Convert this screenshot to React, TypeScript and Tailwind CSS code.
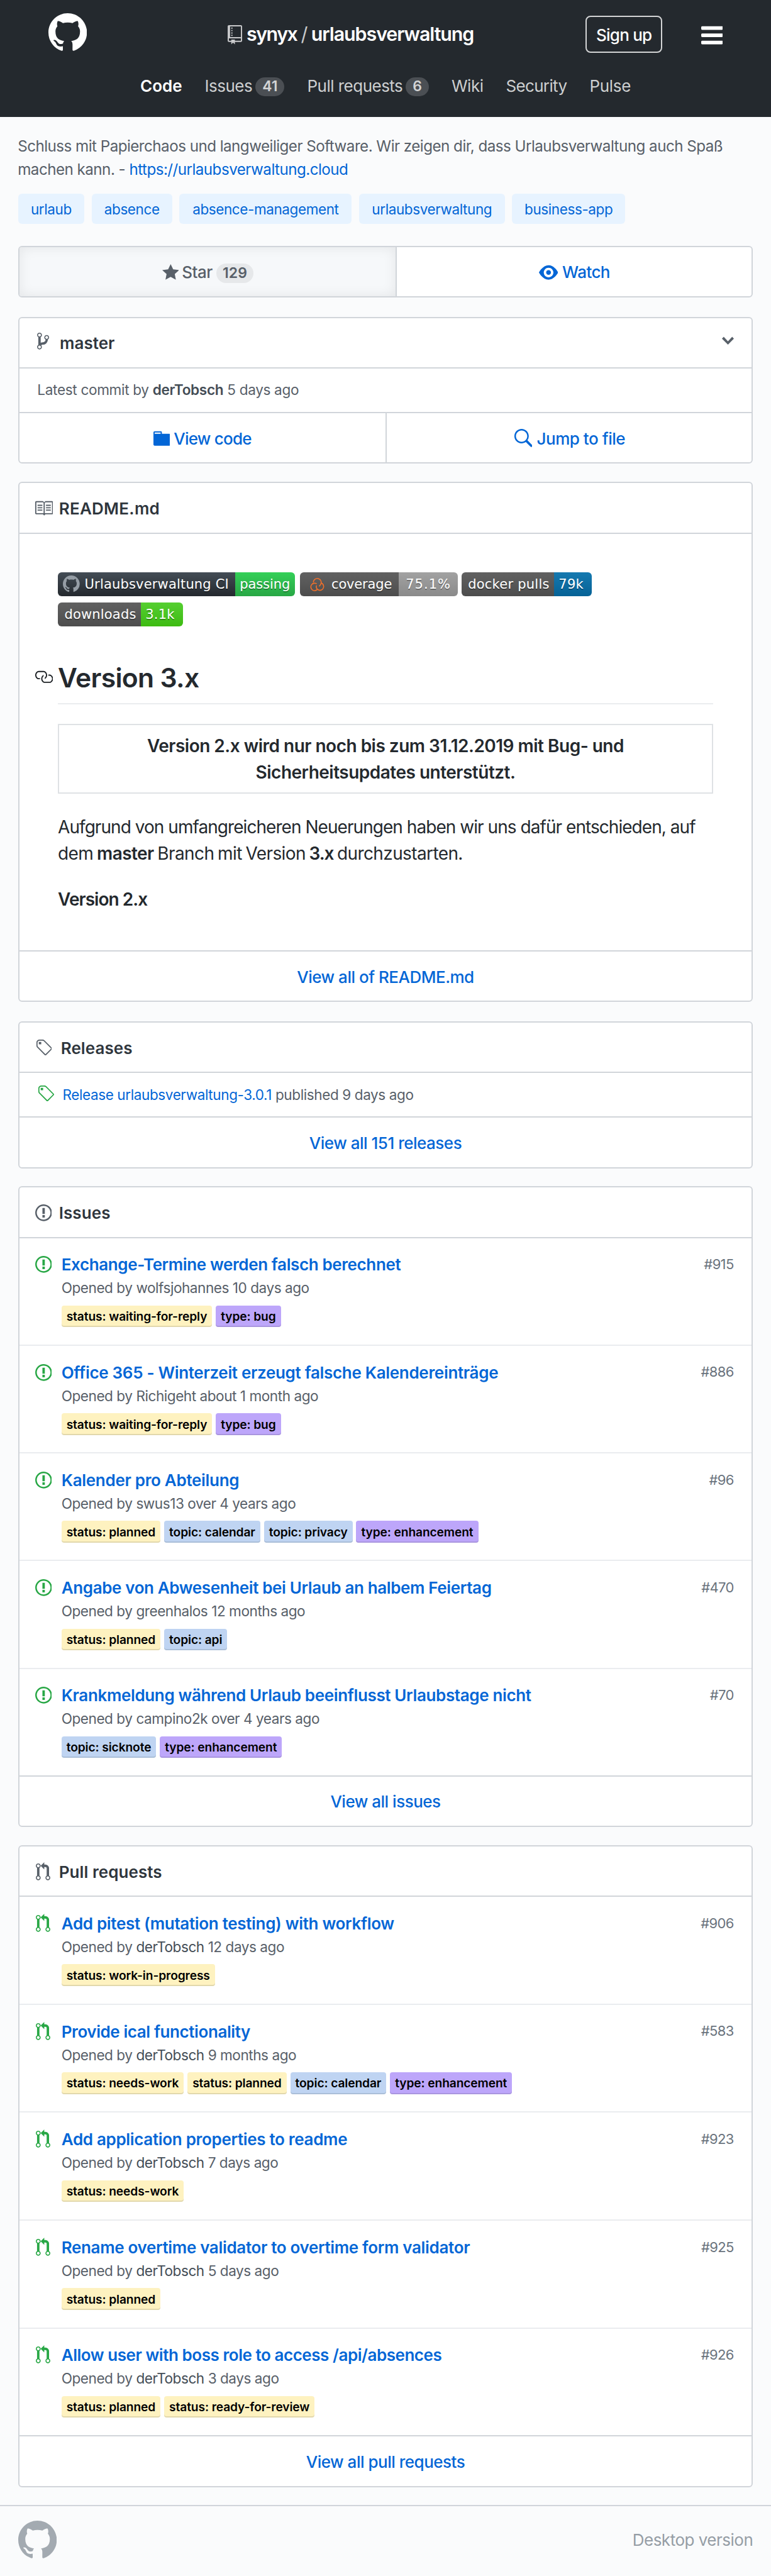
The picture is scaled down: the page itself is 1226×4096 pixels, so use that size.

import type { ReactNode } from "react";

const icons = {
  mark: { w: 16, d: "M8 0C3.58 0 0 3.58 0 8c0 3.54 2.29 6.53 5.47 7.59.4.07.55-.17.55-.38 0-.19-.01-.82-.01-1.49-2.01.37-2.53-.49-2.69-.94-.09-.23-.48-.94-.82-1.13-.28-.15-.68-.52-.01-.53.63-.01 1.08.58 1.23.82.72 1.21 1.87.87 2.33.66.07-.52.28-.87.51-1.07-1.78-.2-3.64-.89-3.64-3.95 0-.87.31-1.59.82-2.15-.08-.2-.36-1.02.08-2.12 0 0 .67-.21 2.2.82.64-.18 1.32-.27 2-.27.68 0 1.36.09 2 .27 1.53-1.04 2.2-.82 2.2-.82.44 1.1.16 1.92.08 2.12.51.56.82 1.27.82 2.15 0 3.07-1.87 3.75-3.65 3.95.29.25.54.73.54 1.48 0 1.07-.01 1.93-.01 2.2 0 .21.15.46.55.38A8.013 8.013 0 0 0 16 8c0-4.42-3.58-8-8-8z" },
  bars: { w: 12, d: "M11.41 9H.59C0 9 0 8.59 0 8c0-.59 0-1 .59-1H11.4c.59 0 .59.41.59 1 0 .59 0 1-.59 1h.01zm0-4H.59C0 5 0 4.59 0 4c0-.59 0-1 .59-1H11.4c.59 0 .59.41.59 1 0 .59 0 1-.59 1h.01zM.59 11H11.4c.59 0 .59.41.59 1 0 .59 0 1-.59 1H.59C0 13 0 12.59 0 12c0-.59 0-1 .59-1z" },
  repo: { w: 12, d: "M4 9H3V8h1v1zm0-3H3v1h1V6zm0-2H3v1h1V4zm0-2H3v1h1V2zm8-1v12c0 .55-.45 1-1 1H6v2l-1.5-1.5L3 16v-2H1c-.55 0-1-.45-1-1V1c0-.55.45-1 1-1h10c.55 0 1 .45 1 1zm-1 10H1v2h2v-1h3v1h5v-2zm0-10H2v9h9V1z" },
  star: { w: 14, d: "M14 6l-4.9-.64L7 1 4.9 5.36 0 6l3.6 3.26L2.67 14 7 11.67 11.33 14l-.93-4.74L14 6z" },
  eye: { w: 16, d: "M8.06 2C3 2 0 8 0 8s3 6 8.06 6C13 14 16 8 16 8s-3-6-7.94-6zM8 12c-2.2 0-4-1.78-4-4 0-2.2 1.8-4 4-4 2.22 0 4 1.8 4 4 0 2.22-1.78 4-4 4zm2-4c0 1.11-.89 2-2 2-1.11 0-2-.89-2-2 0-1.11.89-2 2-2 1.11 0 2 .89 2 2z" },
  branch: { w: 10, d: "M10 5c0-1.11-.89-2-2-2a1.993 1.993 0 0 0-1 3.72v.3c-.02.52-.23.98-.63 1.38-.4.4-.86.61-1.38.63-.83.02-1.48.16-2 .45V4.72a1.993 1.993 0 0 0-1-3.72C.88 1 0 1.89 0 3a2 2 0 0 0 1 1.72v6.56c-.59.35-1 .99-1 1.72 0 1.11.89 2 2 2 1.11 0 2-.89 2-2 0-.53-.2-1-.53-1.36.09-.06.48-.41.59-.47.25-.11.56-.17.94-.17 1.05-.05 1.95-.45 2.75-1.25S8.95 7.77 9 6.73h-.02C9.59 6.37 10 5.73 10 5zM2 1.8c.66 0 1.2.55 1.2 1.2 0 .65-.55 1.2-1.2 1.2C1.35 4.2.8 3.65.8 3c0-.65.55-1.2 1.2-1.2zm0 12.41c-.66 0-1.2-.55-1.2-1.2 0-.65.55-1.2 1.2-1.2.65 0 1.2.55 1.2 1.2 0 .65-.55 1.2-1.2 1.2zm6-8c-.66 0-1.2-.55-1.2-1.2 0-.65.55-1.2 1.2-1.2.65 0 1.2.55 1.2 1.2 0 .65-.55 1.2-1.2 1.2z" },
  chevron: { w: 10, d: "M5 11L0 6l1.5-1.5L5 8.25 8.5 4.5 10 6l-5 5z" },
  folder: { w: 14, d: "M13 4H7V3c0-.66-.31-1-1-1H1c-.55 0-1 .45-1 1v10c0 .55.45 1 1 1h12c.55 0 1-.45 1-1V5c0-.55-.45-1-1-1zM6 4H1V3h5v1z" },
  search: { w: 16, d: "M15.7 13.3l-3.81-3.83A5.93 5.93 0 0 0 13 6c0-3.31-2.69-6-6-6S1 2.69 1 6s2.69 6 6 6c1.3 0 2.48-.41 3.47-1.11l3.83 3.81c.19.2.45.3.7.3.25 0 .52-.09.7-.3a.996.996 0 0 0 0-1.41v.01zM7 10.7c-2.59 0-4.7-2.11-4.7-4.7 0-2.59 2.11-4.7 4.7-4.7 2.59 0 4.7 2.11 4.7 4.7 0 2.59-2.11 4.7-4.7 4.7z" },
  book: { w: 16, d: "M3 5h4v1H3V5zm0 3h4V7H3v1zm0 2h4V9H3v1zm11-5h-4v1h4V5zm0 2h-4v1h4V7zm0 2h-4v1h4V9zm2-6v9c0 .55-.45 1-1 1H9.5l-1 1-1-1H2c-.55 0-1-.45-1-1V3c0-.55.45-1 1-1h5.5l1 1 1-1H15c.55 0 1 .45 1 1zm-8 .5L7.5 3H2v9h6V3.5zm7-.5H9.5l-.5.5V12h6V3z" },
  link: { w: 16, d: "M4 9h1v1H4c-1.5 0-3-1.69-3-3.5S2.55 3 4 3h4c1.45 0 3 1.69 3 3.5 0 1.41-.91 2.72-2 3.25V8.59c.58-.45 1-1.27 1-2.09C10 5.22 8.98 4 8 4H4c-.98 0-2 1.22-2 2.5S3 9 4 9zm9-3h-1v1h1c1 0 2 1.22 2 2.5S13.98 12 13 12H9c-.98 0-2-1.22-2-2.5 0-.83.42-1.64 1-2.09V6.25c-1.09.53-2 1.84-2 3.25C6 11.31 7.55 13 9 13h4c1.45 0 3-1.69 3-3.5S14.5 6 13 6z" },
  tag: { w: 14, d: "M7.73 1.73C7.26 1.26 6.62 1 5.96 1H3.5C2.13 1 1 2.13 1 3.5v2.47c0 .66.27 1.3.73 1.77l6.06 6.06c.39.39 1.02.39 1.41 0l4.59-4.59a.996.996 0 0 0 0-1.41L7.73 1.73zM2.38 7.09c-.31-.3-.47-.7-.47-1.13V3.5c0-.88.72-1.59 1.59-1.59h2.47c.42 0 .83.16 1.13.47l6.14 6.13-4.73 4.73-6.13-6.15zM3.01 3h2v2H3V3h.01z" },
  issue: { w: 14, d: "M7 2.3c3.14 0 5.7 2.56 5.7 5.7s-2.56 5.7-5.7 5.7A5.71 5.71 0 0 1 1.3 8c0-3.14 2.56-5.7 5.7-5.7zM7 1C3.14 1 0 4.14 0 8s3.14 7 7 7 7-3.14 7-7-3.14-7-7-7zm1 3H6v5h2V4zm0 6H6v2h2v-2z" },
  pull: { w: 12, d: "M11 11.28V5c-.03-.78-.34-1.47-.94-2.06C9.46 2.35 8.78 2.03 8 2H7V0L4 3l3 3V4h1c.27.02.48.11.69.31.21.2.3.42.31.69v6.28A1.993 1.993 0 0 0 10 15a1.993 1.993 0 0 0 1-3.72zm-1 2.92c-.66 0-1.2-.55-1.2-1.2 0-.65.55-1.2 1.2-1.2.65 0 1.2.55 1.2 1.2 0 .65-.55 1.2-1.2 1.2zM4 3c0-1.11-.89-2-2-2a1.993 1.993 0 0 0-1 3.72v6.56A1.993 1.993 0 0 0 2 15a1.993 1.993 0 0 0 1-3.72V4.72c.59-.34 1-.98 1-1.72zm-.8 10c0 .66-.55 1.2-1.2 1.2-.65 0-1.2-.55-1.2-1.2 0-.65.55-1.2 1.2-1.2.65 0 1.2.55 1.2 1.2zM2 4.2C1.34 4.2.8 3.65.8 3c0-.65.55-1.2 1.2-1.2.65 0 1.2.55 1.2 1.2 0 .65-.55 1.2-1.2 1.2z" },
};

type IconName = keyof typeof icons;

function Icon({ name, className = "h-[30.6px]" }: { name: IconName; className?: string }) {
  const icon = icons[name];
  return (
    <svg viewBox={`0 0 ${icon.w} 16`} className={`block shrink-0 fill-current ${className}`} aria-hidden>
      <path fillRule="evenodd" d={icon.d} />
    </svg>
  );
}

function NavItem({ label, count, active, tracking = "tracking-[-0.02em]" }: { label: string; count?: string; active?: boolean; tracking?: string }) {
  return (
    <a className={`flex items-start ${active ? "font-semibold text-white" : "text-[#cdcfd0]"}`}>
      <span className={tracking}>{label}</span>
      {count && (
        <span className="mt-[1.6px] ml-[5px] flex h-[30.6px] items-center rounded-full bg-[#4b4f54] px-[11px] text-[23px] font-semibold text-[#d3d4d5]">{count}</span>
      )}
    </a>
  );
}

function Header() {
  return (
    <header className="h-[185.7px] bg-[#24292e] text-white">
      <div className="flex h-[121px] items-start pr-[76.6px] pl-[76.6px]">
        <Icon name="mark" className="mt-[21px] size-[61.3px]" />
        <h1 className="ml-[224px] flex items-start text-[30.4px] leading-[36px] font-semibold">
          <Icon name="repo" className="mt-[40.2px] h-[30.6px] w-[23px] text-[#c8c9cb]" />
          <span className="mt-[35.7px] ml-[7px] tracking-[-0.048em]">synyx</span>
          <span className="mt-[35.7px] ml-[6px] font-normal text-[#c8c9cb]">/</span>
          <span className="mt-[35.7px] ml-[5.4px] tracking-[-0.035em]">urlaubsverwaltung</span>
        </h1>
        <button className="mt-[24.9px] ml-auto flex h-[59.4px] w-[122px] items-center justify-center rounded-[8px] border-2 border-[#d3d4d5] pt-[2px] text-[26px] font-medium tracking-[-0.03em]">
          Sign up
        </button>
        <Icon name="bars" className="mt-[32.6px] ml-[61.7px] h-[46px] w-[34.5px]" />
      </div>
      <nav className="flex justify-center gap-[36px] text-[26px] leading-[31px]">
        <NavItem label="Code" active tracking="tracking-normal" />
        <NavItem label="Issues" count="41" />
        <NavItem label="Pull requests" count="6" />
        <NavItem label="Wiki" />
        <NavItem label="Security" tracking="tracking-[-0.025em]" />
        <NavItem label="Pulse" tracking="tracking-[-0.012em]" />
      </nav>
    </header>
  );
}

function Card({ children, gap = "mt-[28.7px]" }: { children: ReactNode; gap?: string }) {
  return <section className={`overflow-hidden rounded-[6px] border-2 border-[#d1d5da] bg-white ${gap}`}>{children}</section>;
}

function CardHeader({ icon, title, slot, tracking = "tracking-[0.003em]" }: { icon: IconName; title: string; slot: string; tracking?: string }) {
  return (
    <div className="flex h-[80.4px] items-start border-b-2 border-[#d1d5da] pt-[25px]">
      <div className={`flex shrink-0 text-[#586069] ${slot}`}>
        <Icon name={icon} />
      </div>
      <h2 className={`text-[26px] leading-[31px] font-semibold text-[#2f363d] ${tracking}`}>{title}</h2>
    </div>
  );
}

function CardLink({ label, border = true }: { label: string; border?: boolean }) {
  return (
    <a className={`flex items-center justify-center pt-[2px] text-[26px] font-medium tracking-[-0.019em] text-[#0366d6] ${border ? "h-[80.4px] border-t-2 border-[#d1d5da]" : "h-[78.5px]"}`}>
      {label}
    </a>
  );
}

function Badge({ left, right, leftClass, rightClass, icon }: { left: string; right: string; leftClass: string; rightClass: string; icon?: ReactNode }) {
  return (
    <span className="flex h-[38.3px] overflow-hidden rounded-[6px] font-['DejaVu_Sans',sans-serif] text-[21px] leading-[38.3px] whitespace-nowrap text-white [text-shadow:0_2px_0_rgba(1,1,1,0.3)]">
      <span className={`flex items-center bg-linear-to-b ${leftClass}`}>
        {icon}
        <span>{left}</span>
      </span>
      <span className={`bg-linear-to-b ${rightClass}`}>{right}</span>
    </span>
  );
}

const SonarIcon = (
  <svg viewBox="0 0 80 72" className="mr-[10.5px] h-[22.5px] w-[25px] shrink-0 fill-none stroke-[#f3702a] stroke-[5]" aria-hidden>
    <path d="M20 26A20 20 0 1 1 57 36Q55 42 49 45" />
    <path d="M37 33A19 19 0 1 0 40 62" />
    <path d="M60 29A19 19 0 1 1 35 51Q34 46 37 41" />
  </svg>
);

function Readme() {
  return (
    <Card>
      <CardHeader icon="book" title="README.md" slot="w-[63px] pl-[23px]" tracking="tracking-[0.01em]" />
      <div className="h-[662.5px] px-[61.4px] pt-[61.2px] text-[28px] leading-[42.13px] text-[#24292e]">
        <div className="flex">
          <Badge
            left="Urlaubsverwaltung CI"
            right="passing"
            leftClass="w-[281.6px] pl-[7.7px] tracking-[0.0083em] from-[#444d56] to-[#24292e]"
            rightClass="w-[95.8px] pl-[7.5px] tracking-[-0.003em] from-[#34d058] to-[#28a745]"
            icon={<Icon name="mark" className="mr-[8px] size-[26.8px] text-[#959da5]" />}
          />
          <span className="w-[7.7px]" />
          <Badge
            left="coverage"
            right="75.1%"
            leftClass="w-[157px] pl-[14.4px] tracking-[-0.008em] from-[#616161] to-[#4d4d4d]"
            rightClass="w-[94px] pl-[11px] tracking-[0.05em] from-[#a2a2a2] to-[#8a8a8a]"
            icon={SonarIcon}
          />
          <span className="w-[5.7px]" />
          <Badge left="docker pulls" right="79k" leftClass="w-[147.5px] pl-[10.3px] tracking-[0.0117em] from-[#616161] to-[#4d4d4d]" rightClass="w-[59.4px] pl-[7px] tracking-[0.013em] from-[#1579b0] to-[#066296]" />
        </div>
        <div className="mt-[9.6px] flex">
          <Badge left="downloads" right="3.1k" leftClass="w-[132.2px] pl-[10.3px] tracking-[0.009em] from-[#616161] to-[#4d4d4d]" rightClass="w-[67px] pl-[7px] tracking-[0.009em] from-[#55cf30] to-[#3dbb10]" />
        </div>
        <div className="mt-[56px] -ml-[38.4px] flex items-start">
          <Icon name="link" className="mt-[9px] mr-[7.8px] size-[30.6px] text-[#1b1f23]" />
          <h1 className="h-[68.3px] grow border-b-2 border-[#eaecef] text-[42.6px] leading-[52px] font-semibold tracking-[-0.016em]">Version 3.x</h1>
        </div>
        <div className="mt-[31px] h-[111px] border-2 border-[#dfe2e5] pt-[12px] text-center font-semibold tracking-[-0.018em]">
          Version 2.x wird nur noch bis zum 31.12.2019 mit Bug- und
          <br />
          Sicherheitsupdates unterstützt.
        </div>
        <p className="mt-[31.5px] whitespace-nowrap">
          <span className="tracking-[-0.034em]">Aufgrund von umfangreicheren Neuerungen haben wir uns dafür entschieden, auf</span>
          <br />
          <span className="tracking-[-0.022em] [word-spacing:-1.5px]">
            dem <b className="font-semibold tracking-[-0.02em]">master</b> Branch mit Version <b className="font-semibold tracking-[-0.04em]">3.x</b> durchzustarten.
          </span>
        </p>
        <p className="mt-[30.6px] font-semibold tracking-[-0.034em]">Version 2.x</p>
      </div>
      <CardLink label="View all of README.md" />
    </Card>
  );
}

const labelColors = {
  status: "bg-[#fef2c0]",
  type: "bg-[#bda6fa]",
  topic: "bg-[#bfd4f2]",
};

function Label({ text }: { text: string }) {
  const kind = text.split(":")[0] as keyof typeof labelColors;
  return (
    <span className={`flex h-[34.5px] items-center rounded-[4px] px-[8px] pt-[1.5px] text-[19.2px] leading-none font-semibold tracking-[-0.006em] text-black shadow-[inset_0_-2px_0_rgba(27,31,35,0.12)] ${labelColors[kind]}`}>
      {text}
    </span>
  );
}

type Entry = { title: string; tracking: string; author: string; age: string; number: string; labels: string[] };

const issues: Entry[] = [
  { title: "Exchange-Termine werden falsch berechnet", tracking: "tracking-[-0.0148em]", author: "wolfsjohannes", age: "10 days ago", number: "#915", labels: ["status: waiting-for-reply", "type: bug"] },
  { title: "Office 365 - Winterzeit erzeugt falsche Kalendereinträge", tracking: "tracking-[-0.0122em]", author: "Richigeht", age: "about 1 month ago", number: "#886", labels: ["status: waiting-for-reply", "type: bug"] },
  { title: "Kalender pro Abteilung", tracking: "tracking-[-0.0117em]", author: "swus13", age: "over 4 years ago", number: "#96", labels: ["status: planned", "topic: calendar", "topic: privacy", "type: enhancement"] },
  { title: "Angabe von Abwesenheit bei Urlaub an halbem Feiertag", tracking: "tracking-[-0.0144em]", author: "greenhalos", age: "12 months ago", number: "#470", labels: ["status: planned", "topic: api"] },
  { title: "Krankmeldung während Urlaub beeinflusst Urlaubstage nicht", tracking: "tracking-[-0.0138em]", author: "campino2k", age: "over 4 years ago", number: "#70", labels: ["topic: sicknote", "type: enhancement"] },
];

const pulls: Entry[] = [
  { title: "Add pitest (mutation testing) with workflow", tracking: "tracking-[-0.0124em]", author: "derTobsch", age: "12 days ago", number: "#906", labels: ["status: work-in-progress"] },
  { title: "Provide ical functionality", tracking: "tracking-[-0.0159em]", author: "derTobsch", age: "9 months ago", number: "#583", labels: ["status: needs-work", "status: planned", "topic: calendar", "type: enhancement"] },
  { title: "Add application properties to readme", tracking: "tracking-[-0.0124em]", author: "derTobsch", age: "7 days ago", number: "#923", labels: ["status: needs-work"] },
  { title: "Rename overtime validator to overtime form validator", tracking: "tracking-[-0.0128em]", author: "derTobsch", age: "5 days ago", number: "#925", labels: ["status: planned"] },
  { title: "Allow user with boss role to access /api/absences", tracking: "tracking-[-0.0174em]", author: "derTobsch", age: "3 days ago", number: "#926", labels: ["status: planned", "status: ready-for-review"] },
];

function EntryList({ entries, icon, slot, row, authorClass = "" }: { entries: Entry[]; icon: IconName; slot: string; row: string; authorClass?: string }) {
  return (
    <ul>
      {entries.map((e) => (
        <li key={e.number} className={`flex items-start border-b-2 border-[#eaecef] pt-[26.7px] pr-[28.7px] last:border-[#d1d5da] ${row}`}>
          <div className={`flex w-[67px] shrink-0 text-[#28a745] ${slot}`}>
            <Icon name={icon} />
          </div>
          <div className="grow">
            <h3 className={`text-[26px] leading-[31px] font-semibold whitespace-nowrap text-[#0366d6] ${e.tracking}`}>{e.title}</h3>
            <p className="mt-[8px] text-[22.6px] leading-[27px] tracking-[-0.021em] text-[#586069]">
              Opened by <span className={authorClass}>{e.author}</span> {e.age}
            </p>
            <div className="mt-[14.5px] flex gap-[5.9px]">
              {e.labels.map((l) => (
                <Label key={l} text={l} />
              ))}
            </div>
          </div>
          <span className="mt-[1.8px] text-[22px] leading-[27px] tracking-[-0.03em] text-[#6a737d]">{e.number}</span>
        </li>
      ))}
    </ul>
  );
}

const topics = [
  { name: "urlaub", width: "w-[105.4px]" },
  { name: "absence", width: "w-[128.3px]" },
  { name: "absence-management", width: "w-[274px]" },
  { name: "urlaubsverwaltung", width: "w-[231.8px]" },
  { name: "business-app", width: "w-[180px]" },
];

export default function App() {
  return (
    <div className="h-[4096px] w-[1226px] overflow-hidden bg-[#fafbfc] font-[Inter,sans-serif]">
      <Header />
      <main className="px-[28.7px] pt-[29.5px]">
        <p className="-ml-[0.5px] text-[24.2px] leading-[36.4px] tracking-[-0.0219em] whitespace-nowrap text-[#586069]">
          Schluss mit Papierchaos und langweiliger Software. Wir zeigen dir, dass Urlaubsverwaltung auch Spaß
          <br />
          machen kann. - <a className="text-[#0366d6]">https://urlaubsverwaltung.cloud</a>
        </p>
        <div className="mt-[20.3px] flex gap-[11.5px]">
          {topics.map((t) => (
            <a key={t.name} className={`flex h-[48px] items-center justify-center rounded-[6px] bg-[#e7f3ff] pt-px text-[22.5px] tracking-[-0.018em] text-[#0366d6] ${t.width}`}>
              {t.name}
            </a>
          ))}
        </div>

        <div className="mt-[34.5px] flex h-[82.3px] overflow-hidden rounded-[6px] border-2 border-[#d1d5da] bg-white text-[26px] font-medium">
          <button className="flex w-[600.4px] items-center justify-center border-r-2 border-[#d1d5da] bg-[#f6f8fa] pt-[2px] pl-px text-[#586069] shadow-[inset_0_0_20px_rgba(0,0,0,0.08)]">
            <Icon name="star" />
            <span className="ml-[5px] tracking-[-0.021em]">Star</span>
            <span className="mt-[3px] ml-[6px] flex h-[30.6px] w-[59.4px] items-center justify-center rounded-full bg-[#e6e8ea] text-[23px] font-semibold">129</span>
          </button>
          <button className="flex grow items-center justify-center pt-[2px] text-[#0366d6]">
            <Icon name="eye" />
            <span className="ml-[7px] tracking-[-0.0226em]">Watch</span>
          </button>
        </div>

        <Card gap="mt-[30.7px]">
          <div className="flex h-[80.4px] items-start border-b-2 border-[#d1d5da] pr-[28.7px] pl-[28.8px] text-[#586069]">
            <Icon name="branch" className="mt-[21.6px] h-[30.6px] w-[19.1px]" />
            <span className="mt-[24.4px] ml-[16.5px] grow text-[26px] leading-[31px] font-semibold text-[#2f363d]">master</span>
            <Icon name="chevron" className="mt-[21px] h-[30.6px] w-[19.1px]" />
          </div>
          <div className="flex h-[70.9px] items-center border-b-2 border-[#d1d5da] pb-[1.5px] pl-[28.6px] text-[22.6px] whitespace-pre tracking-[-0.015em] text-[#586069]">
            Latest commit by <b className="font-semibold text-[#444d56]">derTobsch</b> 5 days ago
          </div>
          <div className="flex h-[78.4px] text-[26px] font-medium text-[#0366d6]">
            <a className="flex w-[584px] items-center justify-center border-r-2 border-[#d1d5da] pt-[2px]">
              <Icon name="folder" />
              <span className="ml-[6px] tracking-[-0.029em]">View code</span>
            </a>
            <a className="flex grow items-center justify-center pt-[2px]">
              <Icon name="search" />
              <span className="ml-[7px] tracking-[-0.018em]">Jump to file</span>
            </a>
          </div>
        </Card>

        <Readme />

        <Card gap="mt-[30.6px]">
          <CardHeader icon="tag" title="Releases" slot="w-[66px] pl-[24.9px]" />
          <div className="flex h-[68.9px] items-start pl-[28.8px] text-[22.5px] leading-[27px] tracking-[-0.017em] text-[#586069]">
            <div className="mt-[17.2px] flex w-[39.9px] shrink-0 text-[#28a745]">
              <Icon name="tag" />
            </div>
            <p className="mt-[20.4px]">
              <a className="text-[#0366d6]">Release urlaubsverwaltung-3.0.1</a> published 9 days ago
            </p>
          </div>
          <CardLink label="View all 151 releases" />
        </Card>

        <Card>
          <CardHeader icon="issue" title="Issues" slot="w-[63px] pl-[24.9px]" />
          <EntryList entries={issues} icon="issue" slot="pl-[24.9px]" row="h-[171.2px]" />
          <CardLink label="View all issues" border={false} />
        </Card>

        <Card>
          <CardHeader icon="pull" title="Pull requests" slot="w-[63px] pl-[26.8px]" />
          <EntryList entries={pulls} icon="pull" slot="pl-[26.8px]" row="h-[171.6px]" authorClass="text-[#444d56]" />
          <CardLink label="View all pull requests" border={false} />
        </Card>
      </main>

      <footer className="mt-[28.7px] flex items-center justify-between border-t-2 border-[#d1d5da] px-[28.7px] pt-[22.9px]">
        <Icon name="mark" className="size-[61.3px] text-[#a3aab1]" />
        <a className="text-[26px] tracking-[-0.019em] text-[#959da5]">Desktop version</a>
      </footer>
    </div>
  );
}
